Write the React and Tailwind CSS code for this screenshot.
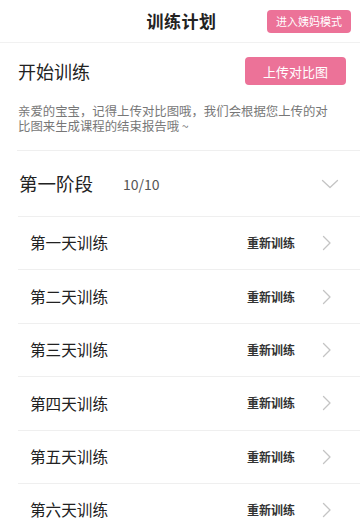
import React from "react";

const font = { fontFamily: '"Noto Sans CJK SC", "Noto Sans", sans-serif' };

function ChevronRight() {
  return (
    <svg width="10" height="16" viewBox="0 0 10 16" fill="none">
      <path d="M1.5 1.5 L8 8 L1.5 14.5" stroke="#c4c4c4" strokeWidth="1.3" strokeLinecap="round" strokeLinejoin="round" />
    </svg>
  );
}

function ChevronDown() {
  return (
    <svg width="18" height="10" viewBox="0 0 18 10" fill="none">
      <path d="M1.5 1.5 L9 8.5 L16.5 1.5" stroke="#c4c4c4" strokeWidth="1.3" strokeLinecap="round" strokeLinejoin="round" />
    </svg>
  );
}

const days = ["第一天训练", "第二天训练", "第三天训练", "第四天训练", "第五天训练", "第六天训练"];

export default function App() {
  return (
    <div className="w-[360px] h-[531px] overflow-hidden bg-white text-[#222]" style={font}>
      <div className="h-[43px] grid grid-cols-[1fr_auto_1fr] items-center border-b border-[#f1f1f1]">
        <div />
        <div className="text-[17px] font-bold tracking-[0.5px] pl-[3px]">训练计划</div>
        <div className="flex justify-end pr-[9px]">
          <button className="w-[84px] h-[23px] rounded-[4px] bg-[#ec7298] text-white text-[11px] leading-none flex items-center justify-center">
            进入姨妈模式
          </button>
        </div>
      </div>

      <div className="pl-[18px] pr-[14px]">
        <div className="flex items-center justify-between pt-[14px]">
          <div className="text-[18px] leading-[28px]">开始训练</div>
          <button className="w-[101px] h-[28px] rounded-[4px] bg-[#ec7298] text-white text-[13px] leading-none flex items-center justify-center">
            上传对比图
          </button>
        </div>
        <p className="mt-[19px] text-[12.4px] leading-[14.5px] text-[#777] w-[318px]">
          亲爱的宝宝，记得上传对比图哦，我们会根据您上传的对比图来生成课程的结束报告哦 ~
        </p>
      </div>

      <div className="ml-[17px] mt-[17px] border-t border-[#efefef] h-[66px] flex items-center pl-[2px] pr-[21px]">
        <div className="text-[18.5px] leading-none">第一阶段</div>
        <div className="ml-[30px] text-[14px] text-[#555] leading-none">10/10</div>
        <div className="ml-auto flex items-center">
          <ChevronDown />
        </div>
      </div>

      <div className="ml-[18px]">
        {days.map((d) => (
          <div key={d} className="h-[53.4px] border-t border-[#efefef] flex items-center pl-[12px] pr-[28px]">
            <div className="text-[15.6px] leading-none">{d}</div>
            <div className="ml-auto text-[12px] font-bold text-[#333] leading-none">重新训练</div>
            <div className="ml-[27px] flex items-center">
              <ChevronRight />
            </div>
          </div>
        ))}
      </div>
    </div>
  );
}
